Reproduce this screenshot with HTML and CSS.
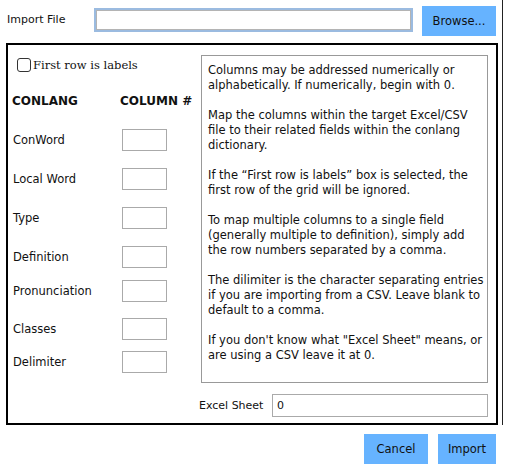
FILE: index.html
```html
<!DOCTYPE html>
<html>
<head>
<meta charset="utf-8">
<link rel="stylesheet" href="styles.css">
</head>
<body>
<div class="window">
  <div class="top">
    <span class="top-label">Import File</span>
    <input class="file-input" type="text">
    <button class="btn browse">Browse...</button>
  </div>
  <div class="panel">
    <div class="left">
      <label class="check-row"><span class="check"></span><span class="check-text">First row is labels</span></label>
      <div class="head-row"><span class="col-a">CONLANG</span><span class="col-b">COLUMN #</span></div>
      <div class="row r1"><span class="lbl">ConWord</span><span class="box"></span></div>
      <div class="row"><span class="lbl">Local Word</span><span class="box"></span></div>
      <div class="row"><span class="lbl">Type</span><span class="box"></span></div>
      <div class="row"><span class="lbl">Definition</span><span class="box"></span></div>
      <div class="row tight"><span class="lbl">Pronunciation</span><span class="box"></span></div>
      <div class="row mid"><span class="lbl">Classes</span><span class="box"></span></div>
      <div class="row tighter"><span class="lbl">Delimiter</span><span class="box"></span></div>
    </div>
    <div class="right">
      <div class="help">
        <p>Columns may be addressed numerically or alphabetically. If numerically, begin with 0.</p>
        <p>Map the columns within the target Excel/CSV file to their related fields within the conlang dictionary.</p>
        <p>If the “First row is labels” box is selected, the first row of the grid will be ignored.</p>
        <p>To map multiple columns to a single field (generally multiple to definition), simply add the row numbers separated by a comma.</p>
        <p>The dilimiter is the character separating entries if you are importing from a CSV. Leave blank to default to a comma.</p>
        <p>If you don't know what "Excel Sheet" means, or are using a CSV leave it at 0.</p>
      </div>
      <div class="sheet-row">
        <span class="sheet-label">Excel Sheet</span>
        <span class="sheet-input">0</span>
      </div>
    </div>
  </div>
  <div class="actions">
    <button class="btn act cancel">Cancel</button>
    <button class="btn act import">Import</button>
  </div>
</div>
</body>
</html>
```

FILE: styles.css
```css
* { box-sizing: border-box; }
html, body { margin: 0; padding: 0; background: #fff; }
body {
  font-family: "DejaVu Sans", Verdana, sans-serif;
  font-size: 11.5px;
  color: #111;
  width: 505px;
  height: 466px;
  overflow: hidden;
}
.window {
  width: 505px;
  height: 466px;
  position: relative;
}
.window::after {
  content: "";
  position: absolute;
  right: 2px;
  top: 0;
  height: 425px;
  width: 1px;
  background: #222;
}
.top {
  display: flex;
  align-items: center;
  height: 43px;
  padding: 0 0 4px 7px;
}
.top-label {
  width: 87px;
  font-size: 11px;
}
.file-input {
  width: 319px;
  height: 24px;
  border: 2px solid #9bbbe0;
  box-shadow: inset 0 0 0 1px #b4b4b4;
  margin: 0;
  padding: 0;
  outline: none;
  background: #fff;
}
.btn {
  border: none;
  background: #66b3ff;
  color: #111;
  font-family: "DejaVu Sans", Verdana, sans-serif;
  font-size: 11.5px;
  padding: 0;
  margin: 0;
}
.browse {
  width: 74px;
  height: 30px;
  margin-left: 9px;
  margin-top: 2px;
}
.panel {
  margin-left: 6px;
  width: 492px;
  height: 382px;
  border: 2px solid #000;
  display: flex;
}
.left {
  width: 193px;
  padding-left: 4px;
}
.check-row {
  display: flex;
  align-items: center;
  margin: 12px 0 0 5px;
  height: 15px;
}
.check {
  width: 14px;
  height: 14px;
  border: 1px solid #333;
  border-radius: 3px;
  background: #fff;
}
.check-text {
  font-family: "DejaVu Serif", "Liberation Serif", serif;
  font-size: 11.5px;
  margin-left: 2px;
}
.head-row {
  display: flex;
  margin-top: 22px;
  height: 14px;
  align-items: center;
  font-weight: bold;
  font-size: 12px;
}
.col-a { width: 108px; }
.row {
  display: flex;
  align-items: center;
  height: 22px;
  margin-top: 17px;
}
.row.r1 { margin-top: 21px; }
.row.tight { margin-top: 12px; }
.row.mid { margin-top: 16px; }
.row.tighter { margin-top: 11px; }
.lbl { width: 110px; padding-left: 1px; }
.box {
  width: 45px;
  height: 22px;
  border: 1px solid #aaa;
  background: #fff;
}
.right {
  width: 287px;
  padding-top: 10px;
}
.help {
  height: 328px;
  border: 1px solid #999;
  padding: 7px 2px 0 6px;
  line-height: 15px;
  font-size: 11.5px;
}
.help p { margin: 0 0 15px 0; }
.sheet-row {
  display: flex;
  align-items: center;
  margin-top: 11px;
  margin-left: -2px;
  font-size: 11px;
}
.sheet-label { width: 73px; }
.sheet-input {
  width: 216px;
  height: 23px;
  border: 1px solid #aaa;
  padding-left: 4px;
  display: flex;
  align-items: center;
}
.actions {
  display: flex;
  justify-content: flex-end;
  gap: 10px;
  margin-top: 9px;
  padding-right: 9px;
}
.act { height: 30px; }
.cancel { width: 64px; }
.import { width: 58px; }
```
